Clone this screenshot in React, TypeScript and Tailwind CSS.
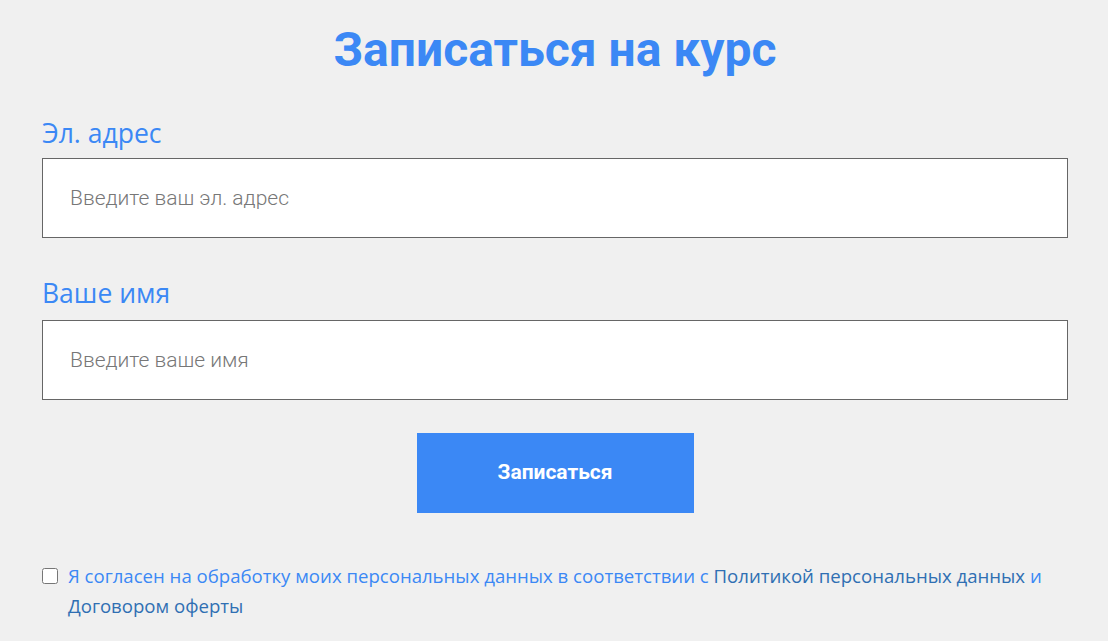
export default function App() {
  return (
    <div className="w-[1108px] h-[641px] bg-[#f0f0f0] pl-[42px] pr-[40px] pt-[22px] overflow-hidden" style={{ fontFamily: "Roboto, sans-serif" }}>
      <h1 className="text-center text-[#3b88f5] font-bold text-[48px] leading-[56px]">Записаться на курс</h1>
      <label className="block mt-[38px] text-[#3b88f5] text-[26.5px] leading-[34px]" style={{ fontFamily: "'Open Sans', sans-serif" }}>Эл. адрес</label>
      <input className="block mt-[8px] w-full h-[80px] bg-white border border-[#666] px-[27px] text-[21px] font-light placeholder:text-[#777] outline-none" placeholder="Введите ваш эл. адрес" />
      <label className="block mt-[38px] text-[#3b88f5] text-[26.5px] leading-[34px]" style={{ fontFamily: "'Open Sans', sans-serif" }}>Ваше имя</label>
      <input className="block mt-[10px] w-full h-[80px] bg-white border border-[#666] px-[27px] text-[21px] font-light placeholder:text-[#777] outline-none" placeholder="Введите ваше имя" />
      <div className="flex justify-center mt-[33px]">
        <button className="w-[277px] h-[80px] bg-[#3b88f5] text-white font-bold text-[21px]">Записаться</button>
      </div>
      <div className="flex mt-[48px] gap-[10px] text-[18.6px] leading-[30px] w-[1000px]" style={{ fontFamily: "'Open Sans', sans-serif" }}>
        <input type="checkbox" className="mt-[7px] w-[16px] h-[16px] shrink-0" />
        <p className="text-[#3b88f5]">Я согласен на обработку моих персональных данных в соответствии с <span className="text-[#2f6fb3]">Политикой персональных данных</span> и <span className="text-[#2f6fb3]">Договором оферты</span></p>
      </div>
    </div>
  );
}
